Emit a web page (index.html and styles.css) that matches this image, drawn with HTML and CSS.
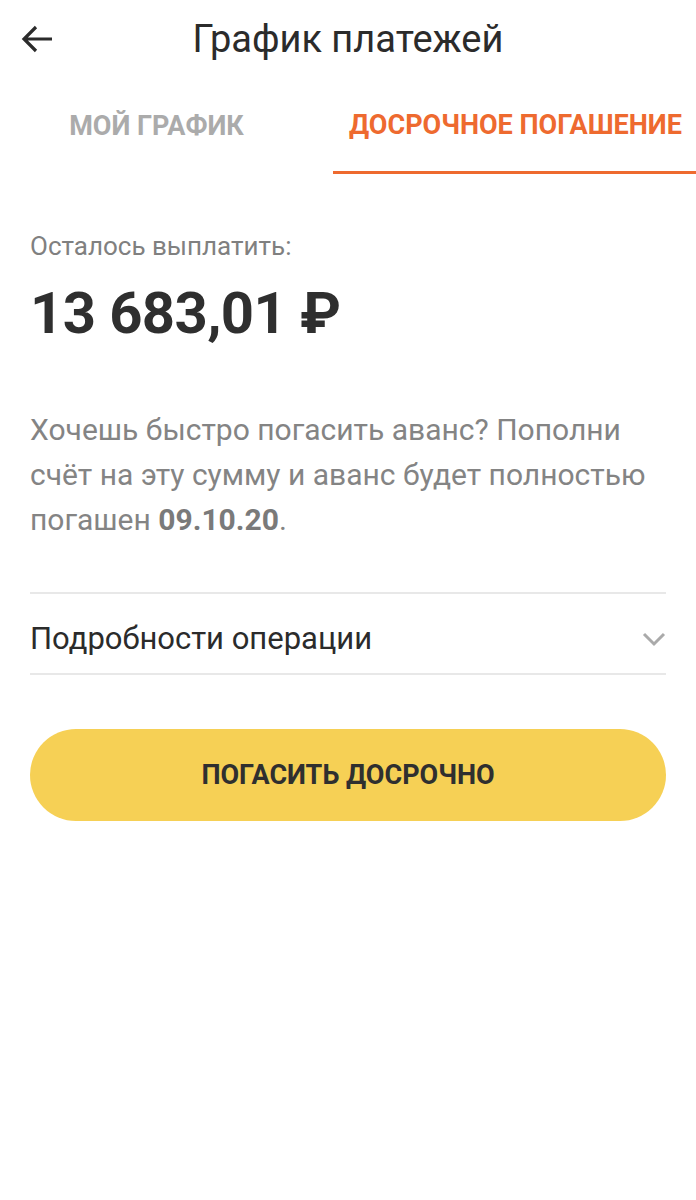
FILE: index.html
```html
<!DOCTYPE html>
<html lang="ru">
<head>
<meta charset="utf-8">
<link rel="stylesheet" href="styles.css">
</head>
<body>
<div class="screen">
  <header class="topbar">
    <svg class="back" width="32" height="30" viewBox="0 0 32 30"><path d="M31 15H3M15 3L3 15l12 12" fill="none" stroke="#2b2b2b" stroke-width="3.2" stroke-linecap="butt" stroke-linejoin="miter"/></svg>
    <h1 class="title">График платежей</h1>
  </header>
  <nav class="tabs">
    <div class="tab">МОЙ ГРАФИК</div>
    <div class="tab active">ДОСРОЧНОЕ ПОГАШЕНИЕ</div>
  </nav>
  <main class="content">
    <div class="label">Осталось выплатить:</div>
    <div class="amount">13 683,01 ₽</div>
    <p class="info">Хочешь быстро погасить аванс? Пополни счёт на эту сумму и аванс будет полностью погашен <b class="date">09.10.20</b>.</p>
    <div class="details">
      <span>Подробности операции</span>
      <svg class="chev" width="24" height="16" viewBox="0 0 24 16"><path d="M2 3l10 10L22 3" fill="none" stroke="#aaaaaa" stroke-width="3"/></svg>
    </div>
    <button class="pay">ПОГАСИТЬ ДОСРОЧНО</button>
  </main>
</div>
</body>
</html>
```
FILE: styles.css
```css
* { box-sizing: border-box; }
html, body { margin: 0; padding: 0; background: #fff; }
body { font-family: Roboto, "Noto Sans", sans-serif; width: 696px; height: 1200px; overflow: hidden; }
.screen { display: flex; flex-direction: column; }
.topbar { position: relative; height: 80px; display: flex; align-items: center; justify-content: center; }
.back { position: absolute; left: 21px; top: 24px; }
.title { margin: 0; font-weight: 400; font-size: 38px; color: #2b2b2b; letter-spacing: 0; padding-bottom: 2px; }
.tabs { display: grid; grid-template-columns: 333px 363px; height: 94px; }
.tab { display: flex; align-items: center; justify-content: center; font-weight: 700; font-size: 27px; color: #ababab; padding-bottom: 2px; }
.tab:first-child { padding-right: 20px; }
.tab.active { color: #ee6a2f; border-bottom: 3px solid #ee6a2f; padding-left: 2px; }
.content { padding: 0 30px; }
.label { margin-top: 57px; font-size: 26px; color: #808080; line-height: 30px; }
.amount { margin-top: 20px; font-size: 58px; font-weight: 700; color: #2f2f2f; line-height: 64px; letter-spacing: -0.6px; }
.info { margin: 62px 0 0; font-size: 30px; line-height: 45px; color: #848484; }
.info .date { color: #7a7a7a; font-weight: 700; display: inline-block; }
.details { margin-top: 50px; height: 83px; border-top: 2px solid #e8e8e8; border-bottom: 2px solid #e8e8e8; display: flex; align-items: center; justify-content: space-between; font-size: 31px; color: #2b2b2b; padding-top: 10px; }
.pay { margin-top: 54px; width: 100%; height: 92px; border: none; border-radius: 46px; background: #f6d055; font-family: inherit; font-weight: 700; font-size: 27px; color: #2f2f2f; display: flex; align-items: center; justify-content: center; padding: 0; }
```
